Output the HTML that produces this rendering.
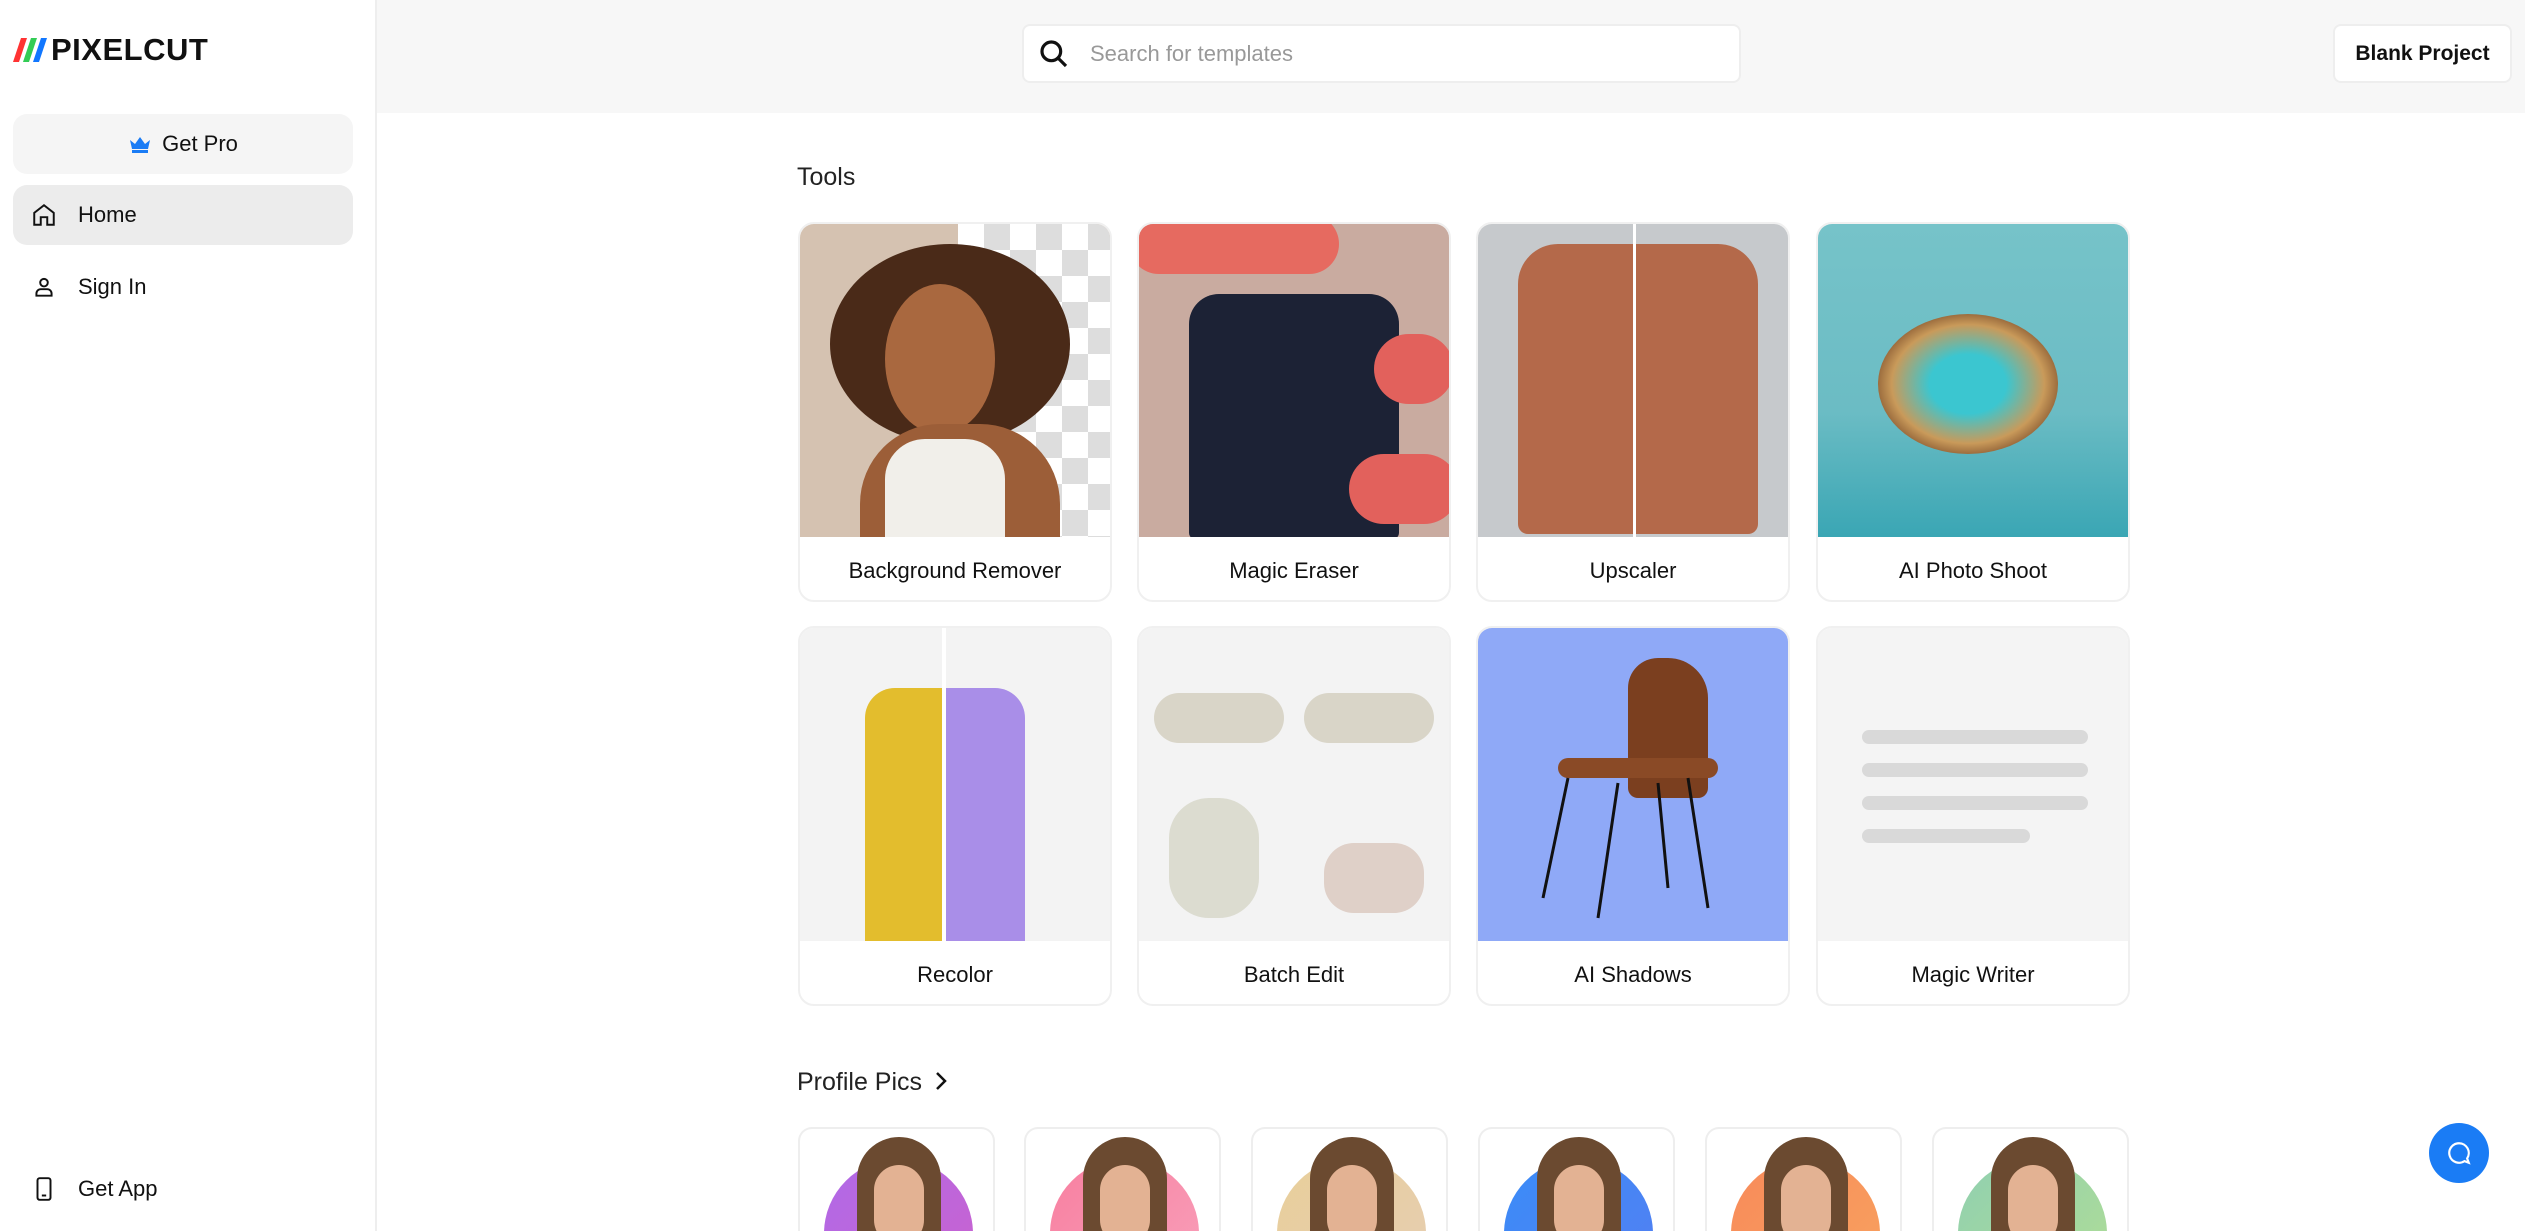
<!DOCTYPE html>
<html><head><meta charset="utf-8"><style>
*{box-sizing:border-box;margin:0;padding:0}
html,body{width:2525px;height:1231px;overflow:hidden}
body{background:#fff;font-family:"Liberation Sans",sans-serif;color:#111;position:relative}
.side{position:absolute;left:0;top:0;width:377px;height:1231px;border-right:2px solid #eee;background:#fff}
.top{position:absolute;left:377px;top:0;right:0;height:113px;background:#f7f7f7}
.logo{position:absolute;left:13px;top:32px;font-weight:900;font-size:31px;letter-spacing:0.5px;display:flex;align-items:center}
.btn{position:absolute;left:13px;width:340px;height:60px;border-radius:14px;font-size:22px;display:flex;align-items:center}
.nav{position:absolute;left:31px;font-size:22px;display:flex;align-items:center;gap:21px}
.search{position:absolute;left:1022px;top:24px;width:719px;height:59px;background:#fff;border:2px solid #eee;border-radius:8px;display:flex;align-items:center;padding-left:14px;color:#999;font-size:22px}
.blank{position:absolute;left:2333px;top:24px;width:179px;height:59px;background:#fff;border:2px solid #eee;border-radius:8px;font-size:21px;font-weight:bold;display:flex;align-items:center;justify-content:center}
h2{position:absolute;font-weight:normal;font-size:25px;color:#222}
.card{position:absolute;width:314px;height:380px;border:2px solid #f0f0f0;border-radius:16px;overflow:hidden;background:#fff}
.img{position:absolute;left:0;top:0;width:100%;height:313px;overflow:hidden}
.lbl{position:absolute;left:0;right:0;top:313px;height:67px;display:flex;align-items:center;justify-content:center;font-size:22px;color:#111}
.pc{position:absolute;top:1127px;width:197px;height:104px;border:2px solid #eee;border-bottom:none;border-radius:14px 14px 0 0;overflow:hidden;background:#fff}
.pc .bg{position:absolute;left:24px;top:30px;width:149px;height:200px;border-radius:75px 75px 0 0}
.pc .face{position:absolute;left:57px;top:8px;width:84px;height:120px;border-radius:42px 42px 0 0;background:#6b4a30}
.pc .face:after{content:"";position:absolute;left:17px;top:28px;width:50px;height:80px;border-radius:25px;background:#e3b293}
</style></head><body>
<div class="side">
 <div class="logo"><svg width="36" height="26" viewBox="0 0 36 26"><path d="M0 25 L8 1 L14 1 L6 25Z" fill="#f33"/><path d="M10 25 L18 1 L24 1 L16 25Z" fill="#3c5"/><path d="M20 25 L28 1 L34 1 L26 25Z" fill="#17f"/></svg><span style="margin-left:2px">PIXELCUT</span></div>
 <div class="btn" style="top:114px;background:#f5f5f5;justify-content:center;font-weight:500"><svg width="24" height="20" viewBox="0 0 24 20" style="margin-right:10px"><path d="M2 6 L7 10 L12 3 L17 10 L22 6 L20 15 H4Z" fill="#1a7cf5"/><rect x="4" y="16" width="16" height="3" fill="#1a7cf5"/></svg>Get Pro</div>
 <div class="btn" style="top:185px;background:#ececec"></div>
 <div class="nav" style="top:202px"><svg width="26" height="26" viewBox="0 0 24 24" fill="none" stroke="#111" stroke-width="1.8"><path d="M3 21V10L12 3L21 10V21H15V14H9V21Z"/></svg><span>Home</span></div>
 <div class="nav" style="top:274px"><svg width="26" height="26" viewBox="0 0 24 24" fill="none" stroke="#111" stroke-width="1.8"><circle cx="12" cy="8" r="3.5"/><path d="M5 20v-2a4 4 0 0 1 4-4h6a4 4 0 0 1 4 4v2Z"/></svg><span>Sign In</span></div>
 <div class="nav" style="top:1176px"><svg width="26" height="26" viewBox="0 0 24 24" fill="none" stroke="#111" stroke-width="1.8"><rect x="6" y="2" width="12" height="20" rx="2"/><path d="M10 18h4"/></svg><span>Get App</span></div>
</div>
<div class="top"></div>
<div class="search"><svg width="32" height="32" viewBox="0 0 24 24" fill="none" stroke="#111" stroke-width="2.4"><circle cx="10" cy="10" r="7"/><path d="M15 15l6 6"/></svg><span style="margin-left:20px">Search for templates</span></div>
<div class="blank">Blank Project</div>

<h2 style="left:797px;top:163px">Tools</h2>

<div class="card" style="left:798px;top:222px"><div class="img" style="background:#d5c2b1">
 <div style="position:absolute;left:158px;top:0;width:156px;height:313px;background:repeating-conic-gradient(#ddd 0 25%,#fff 0 50%) 0 0/52px 52px"></div>
 <div style="position:absolute;left:30px;top:20px;width:240px;height:200px;border-radius:50%;background:#4a2a18"></div>
 <div style="position:absolute;left:85px;top:60px;width:110px;height:150px;border-radius:50%;background:#a9683f"></div>
 <div style="position:absolute;left:60px;top:200px;width:200px;height:140px;border-radius:80px 80px 0 0;background:#9c5e38"></div>
 <div style="position:absolute;left:85px;top:215px;width:120px;height:110px;border-radius:40px 40px 0 0;background:#f1efea"></div>
</div><div class="lbl">Background Remover</div></div>

<div class="card" style="left:1137px;top:222px"><div class="img" style="background:#c9aba0">
 <div style="position:absolute;left:-10px;top:-10px;width:210px;height:60px;border-radius:30px;background:#e66a60"></div>
 <div style="position:absolute;left:50px;top:70px;width:210px;height:245px;border-radius:30px 30px 6px 6px;background:#1c2235"></div>
 <div style="position:absolute;left:235px;top:110px;width:80px;height:70px;border-radius:40px;background:#e2615c"></div>
 <div style="position:absolute;left:210px;top:230px;width:110px;height:70px;border-radius:40px;background:#e2615c"></div>
</div><div class="lbl">Magic Eraser</div></div>

<div class="card" style="left:1476px;top:222px"><div class="img" style="background:#c6c9cc">
 <div style="position:absolute;left:40px;top:20px;width:240px;height:290px;border-radius:40px 40px 10px 10px;background:#b4694a"></div>
 <div style="position:absolute;left:155px;top:0;width:3px;height:313px;background:#fff"></div>
</div><div class="lbl">Upscaler</div></div>

<div class="card" style="left:1816px;top:222px"><div class="img" style="background:linear-gradient(180deg,#76c3c9 0%,#6bbcc4 60%,#3aa6b4 100%)">
 <div style="position:absolute;left:60px;top:90px;width:180px;height:140px;border-radius:50%;background:radial-gradient(#3bc6d0 30%,#c99a5a 60%,#8a5b33 75%,transparent 76%)"></div>
</div><div class="lbl">AI Photo Shoot</div></div>

<div class="card" style="left:798px;top:626px"><div class="img" style="background:#f3f3f3">
 <div style="position:absolute;left:65px;top:60px;width:80px;height:260px;border-radius:30px 0 0 0;background:#e3bd2d"></div>
 <div style="position:absolute;left:145px;top:60px;width:80px;height:260px;border-radius:0 30px 0 0;background:#a98ee8"></div>
 <div style="position:absolute;left:142px;top:0;width:4px;height:313px;background:#fff"></div>
</div><div class="lbl">Recolor</div></div>

<div class="card" style="left:1137px;top:626px"><div class="img" style="background:#f3f3f3">
 <div style="position:absolute;left:15px;top:65px;width:130px;height:50px;border-radius:25px;background:#d9d5c8"></div>
 <div style="position:absolute;left:165px;top:65px;width:130px;height:50px;border-radius:25px;background:#d9d5c8"></div>
 <div style="position:absolute;left:30px;top:170px;width:90px;height:120px;border-radius:40px;background:#dcdcd0"></div>
 <div style="position:absolute;left:185px;top:215px;width:100px;height:70px;border-radius:30px;background:#dfd0c8"></div>
</div><div class="lbl">Batch Edit</div></div>

<div class="card" style="left:1476px;top:626px"><div class="img" style="background:#8fa9f7">
 <div style="position:absolute;left:150px;top:30px;width:80px;height:140px;border-radius:30px 40px 10px 10px;background:#7b3f1f"></div>
 <div style="position:absolute;left:80px;top:130px;width:160px;height:20px;border-radius:10px;background:#8a4a26"></div>
 <svg style="position:absolute;left:60px;top:140px" width="200" height="160"><path d="M30 10 L5 130 M80 15 L60 150 M150 10 L170 140 M120 15 L130 120" stroke="#111" stroke-width="3"/></svg>
</div><div class="lbl">AI Shadows</div></div>

<div class="card" style="left:1816px;top:626px"><div class="img" style="background:#f4f4f4">
 <div style="position:absolute;left:44px;top:102px;width:226px;height:14px;border-radius:7px;background:#d9d9d9"></div>
 <div style="position:absolute;left:44px;top:135px;width:226px;height:14px;border-radius:7px;background:#d9d9d9"></div>
 <div style="position:absolute;left:44px;top:168px;width:226px;height:14px;border-radius:7px;background:#d9d9d9"></div>
 <div style="position:absolute;left:44px;top:201px;width:168px;height:14px;border-radius:7px;background:#d9d9d9"></div>
</div><div class="lbl">Magic Writer</div></div>

<h2 style="left:797px;top:1068px">Profile Pics <svg width="16" height="22" viewBox="0 0 16 22" style="vertical-align:-2px;margin-left:4px"><path d="M4 3l8 8-8 8" fill="none" stroke="#111" stroke-width="2.5"/></svg></h2>

<div class="pc" style="left:798px"><div class="bg" style="background:linear-gradient(135deg,#b06ae8,#d060c8)"></div><div class="face"></div></div>
<div class="pc" style="left:1024px"><div class="bg" style="background:linear-gradient(135deg,#f87fa0,#f9a8c0)"></div><div class="face"></div></div>
<div class="pc" style="left:1251px"><div class="bg" style="background:linear-gradient(135deg,#e8cf9a,#e6cdb8)"></div><div class="face"></div></div>
<div class="pc" style="left:1478px"><div class="bg" style="background:linear-gradient(135deg,#3a8cf8,#5a7cf0)"></div><div class="face"></div></div>
<div class="pc" style="left:1705px"><div class="bg" style="background:linear-gradient(135deg,#f88a5a,#f8a860)"></div><div class="face"></div></div>
<div class="pc" style="left:1932px"><div class="bg" style="background:linear-gradient(135deg,#90d0b0,#b8e090)"></div><div class="face"></div></div>

<div style="position:absolute;left:2429px;top:1123px;width:60px;height:60px;border-radius:50%;background:#1a7cf5;display:flex;align-items:center;justify-content:center"><svg width="26" height="26" viewBox="0 0 24 24" fill="none" stroke="#fff" stroke-width="2"><path d="M12 3a9 9 0 1 0 5 16.5L21 21l-1.5-4A9 9 0 0 0 12 3Z"/></svg></div>
</body></html>
